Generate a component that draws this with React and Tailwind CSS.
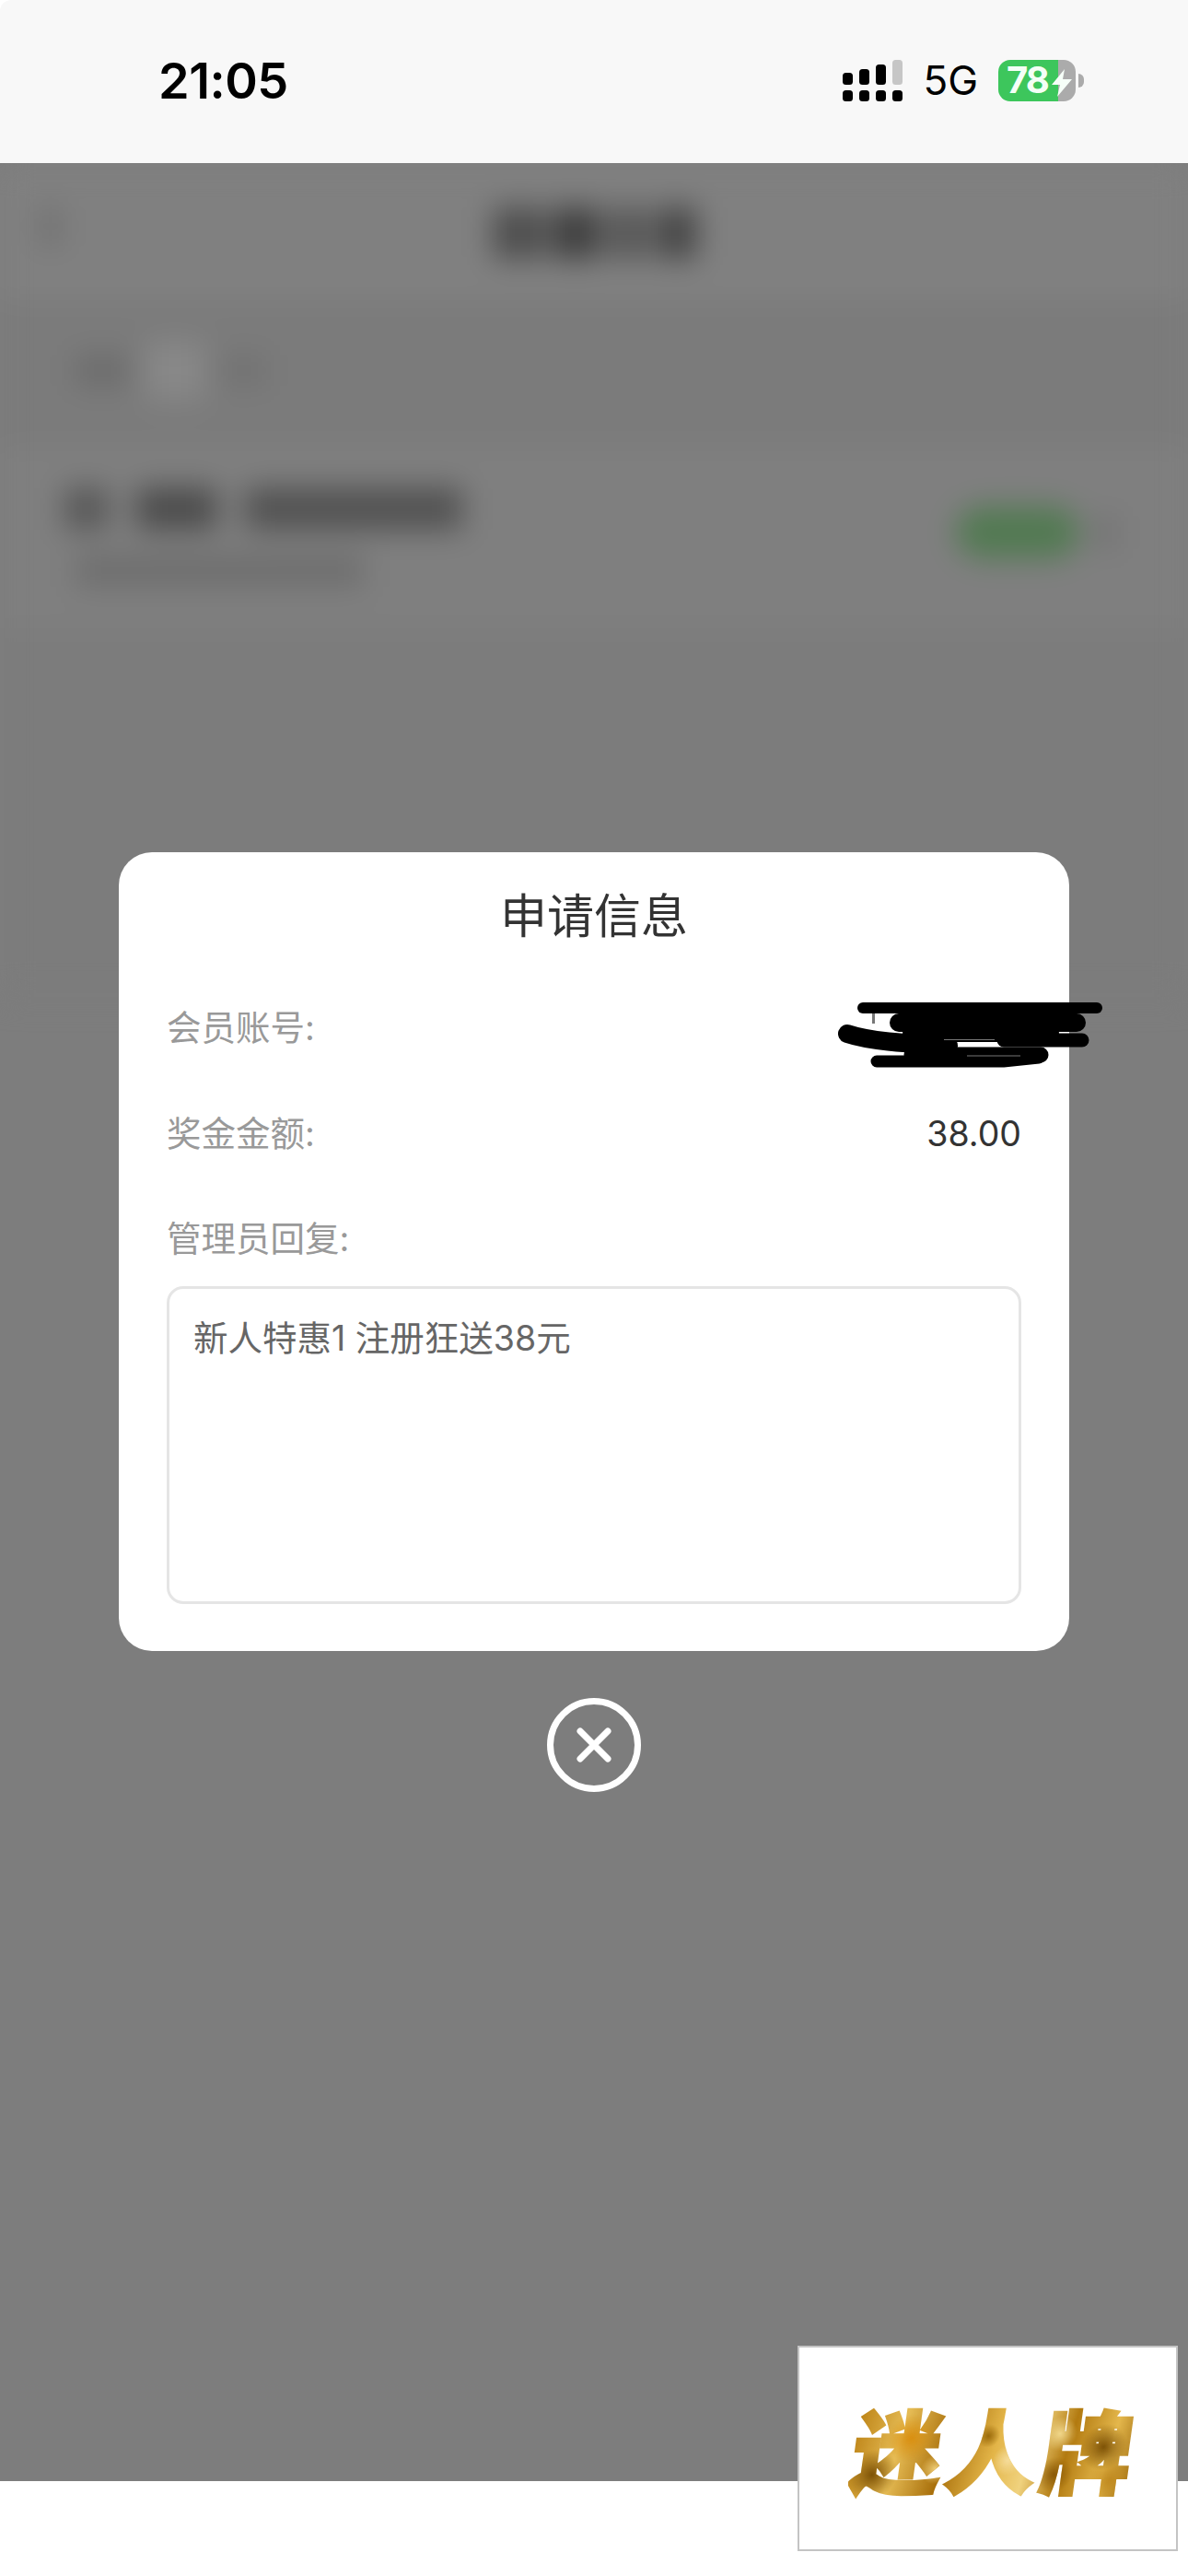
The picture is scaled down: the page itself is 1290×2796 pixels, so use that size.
const sans = 'font-["Inter","Noto_Sans_CJK_SC",sans-serif]'

function SignalIcon() {
  const bars = [
    { x: 0, y: 14, h: 13 },
    { x: 18, y: 10, h: 17 },
    { x: 36, y: 5, h: 22 },
  ]
  return (
    <svg width="65" height="45" viewBox="0 0 65 45" className="block">
      {bars.map(b => <rect key={b.x} x={b.x} y={b.y} width="11" height={b.h} rx="3.5" fill="#000" />)}
      <rect x="54" y="0" width="11" height="27" rx="3.5" fill="#c6c6c6" />
      {[0, 18, 36, 54].map(x => <rect key={x} x={x} y="33" width="11" height="12" rx="3.5" fill="#000" />)}
    </svg>
  )
}

function Battery() {
  return (
    <div className="flex items-center">
      <div className="relative flex h-[45px] w-[84px]">
        <div className="flex h-full w-[65px] items-center rounded-l-[13px] bg-[#3dc65c] pl-[9px]">
          <span className="font-['Inter',sans-serif] text-[40px] leading-none font-bold tracking-[-2px] text-[#f4fff6]">78</span>
        </div>
        <div className="h-full flex-1 rounded-r-[13px] bg-[#ababab]" />
        <svg width="22" height="30" viewBox="0 0 22 30" className="absolute top-[10px] left-[58px]">
          <path d="M14 0 L0 17 H9 L6 30 L22 11 H12 Z" fill="#f6fff8" />
        </svg>
      </div>
      <div className="ml-[3px] h-[15px] w-[6px] rounded-r-full bg-[#ababab]" />
    </div>
  )
}

function StatusBar() {
  return (
    <div className="flex h-[177px] shrink-0 items-center justify-between rounded-tl-[12px] bg-[#f8f8f8] pr-[113px] pl-[172px]">
      <span className="mt-[-2px] font-['Inter',sans-serif] text-[54px] leading-none font-semibold tracking-[-0.5px] text-black">21:05</span>
      <div className="mt-[-3px] flex items-center">
        <SignalIcon />
        <span className="mr-[22px] ml-[22px] font-['Inter',sans-serif] text-[44px] leading-none text-black">5G</span>
        <Battery />
      </div>
    </div>
  )
}

// the page behind the dialog, only seen out of focus
function BlurredPage() {
  return (
    <div className="blur-[16px]">
      <div className="flex h-[138px] items-center bg-[#808080] pl-[46px]">
        <div className="h-[46px] w-[18px] rounded-full bg-[#6c6c6c]" />
        <div className="mt-[14px] ml-[471px] flex h-[56px] gap-[8px]">
          <div className="w-[57px] rounded bg-[#4e4e4e]" />
          <div className="w-[50px] rounded bg-[#3e3e3e]" />
          <div className="w-[49px] rounded bg-[#585858]" />
          <div className="w-[41px] rounded bg-[#444]" />
        </div>
      </div>
      <div className="h-[3px] bg-[#909090]" />
      <div className="flex h-[174px] items-center gap-[17px] bg-[#7b7b7b] px-[82px] pb-[6px]">
        <div className="h-[34px] w-[58px] rounded bg-[#6c6c6c]" />
        <div className="h-[64px] w-[66px] rounded bg-[#888]" />
        <div className="h-[34px] w-[49px] rounded bg-[#727272]" />
      </div>
      <div className="flex h-[190px] items-start justify-between border-t-[3px] border-[#8a8a8a] bg-[#7f7f7f] pt-[34px] pr-[80px] pl-[70px]">
        <div>
          <div className="flex h-[46px] gap-[30px]">
            <div className="w-[48px] rounded bg-[#585858]" />
            <div className="w-[88px] rounded bg-[#4c4c4c]" />
            <div className="w-[236px] rounded bg-[#525252]" />
          </div>
          <div className="mt-[26px] ml-[12px] h-[36px] w-[313px] rounded bg-[#6e6e6e]" />
        </div>
        <div className="mt-[21px] flex items-center gap-[20px]">
          <div className="h-[56px] w-[134px] rounded-full bg-[#527a52]" />
          <div className="h-[36px] w-[18px] rounded bg-[#6f6f6f]" />
        </div>
      </div>
      <div className="h-[400px] bg-[#7c7c7c]" />
    </div>
  )
}

function Scribble() {
  return (
    <svg width="310" height="100" viewBox="0 0 310 100" className="absolute top-[150px] left-[771px]">
      <rect x="47" y="24" width="3" height="12" fill="#777" />
      <g fill="none" stroke="#000" strokeLinecap="round">
        <path d="M37 19 H291" strokeWidth="12" />
        <path d="M76 35 H269" strokeWidth="20" />
        <path d="M20 47 C50 57 100 58 130 60" strokeWidth="20" />
        <path d="M90 46 H240" strokeWidth="20" />
        <path d="M190 54 H275" strokeWidth="15" />
        <path d="M52 77 H190 L228 73" strokeWidth="13" />
        <path d="M90 70 H230" strokeWidth="17" />
      </g>
      <path d="M125 53.5 H180 M150 71 H208" stroke="#777" strokeWidth="1" />
    </svg>
  )
}

function CloseButton() {
  return (
    <svg width="104" height="104" viewBox="0 0 104 104" className="mt-[50px] block">
      <circle cx="52" cy="52" r="47.5" fill="none" stroke="#fff" strokeWidth="7" />
      <path d="M37 37 L67 67 M67 37 L37 67" stroke="#fff" strokeWidth="7" strokeLinecap="round" />
    </svg>
  )
}

function InfoDialog() {
  return (
    <div className={`absolute inset-x-0 top-[748px] flex flex-col items-center ${sans}`}>
      <div className="relative h-[867px] w-[1032px] rounded-[36px] bg-white px-[52px] pt-[38px]">
        <h2 className="text-center text-[51px] leading-[64px] font-normal text-[#333]">申请信息</h2>
        <div className="mt-[57px] flex h-[64px] items-center justify-between text-[37.5px] text-[#999]">
          <span>会员账号:</span>
        </div>
        <div className="mt-[51px] flex h-[64px] items-center justify-between text-[37.5px] text-[#999]">
          <span>奖金金额:</span>
          <span className="text-[#333]">38.00</span>
        </div>
        <div className="mt-[50px] flex h-[64px] items-center text-[37.5px] text-[#999]">
          <span>管理员回复:</span>
        </div>
        <div className="mt-[19px] h-[345px] w-[928px] rounded-[18px] border-[3px] border-[#e5e5e5] px-[26px] pt-[27px] text-[37.5px] leading-[54px] text-[#666]">
          新人特惠1 注册狂送38元
        </div>
        <Scribble />
      </div>
      <CloseButton />
    </div>
  )
}

function Logo() {
  return (
    <div className="absolute top-[2546px] left-[866px] flex h-[223px] w-[413px] justify-center border-2 border-[#c4c4c4] bg-white pt-[48px]">
      <span className="inline-block h-fit origin-bottom skew-x-[-8deg] bg-[radial-gradient(circle_at_8%_75%,#7d5206_0,transparent_9%),radial-gradient(circle_at_20%_42%,#d98f10_0,transparent_10%),radial-gradient(circle_at_30%_70%,#f0cf78_0,transparent_7%),radial-gradient(circle_at_47%_40%,#9a6a0a_0,transparent_7%),radial-gradient(circle_at_55%_62%,#f5dc9a_0,transparent_9%),radial-gradient(circle_at_72%_38%,#f0d68a_0,transparent_8%),radial-gradient(circle_at_72%_75%,#8a5a08_0,transparent_8%),radial-gradient(circle_at_88%_50%,#7d5206_0,transparent_9%),radial-gradient(circle_at_92%_80%,#c08a20_0,transparent_8%),linear-gradient(100deg,#b87d10_0%,#e6bc55_18%,#a9700c_34%,#e3b548_50%,#f0d27e_62%,#b27a10_74%,#e4b74c_88%,#96640a_100%)] bg-clip-text font-['Noto_Sans_CJK_SC',sans-serif] text-[98px] leading-[120px] font-black tracking-[5px] text-transparent [-webkit-text-stroke:3px_transparent]">
        迷人牌
      </span>
    </div>
  )
}

export default function App() {
  return (
    <div className="relative flex h-[2796px] w-[1290px] flex-col overflow-hidden bg-white">
      <StatusBar />
      <main className="relative h-[2516px] shrink-0 overflow-hidden bg-[#7d7d7d]">
        <BlurredPage />
        <InfoDialog />
      </main>
      <Logo />
    </div>
  )
}
